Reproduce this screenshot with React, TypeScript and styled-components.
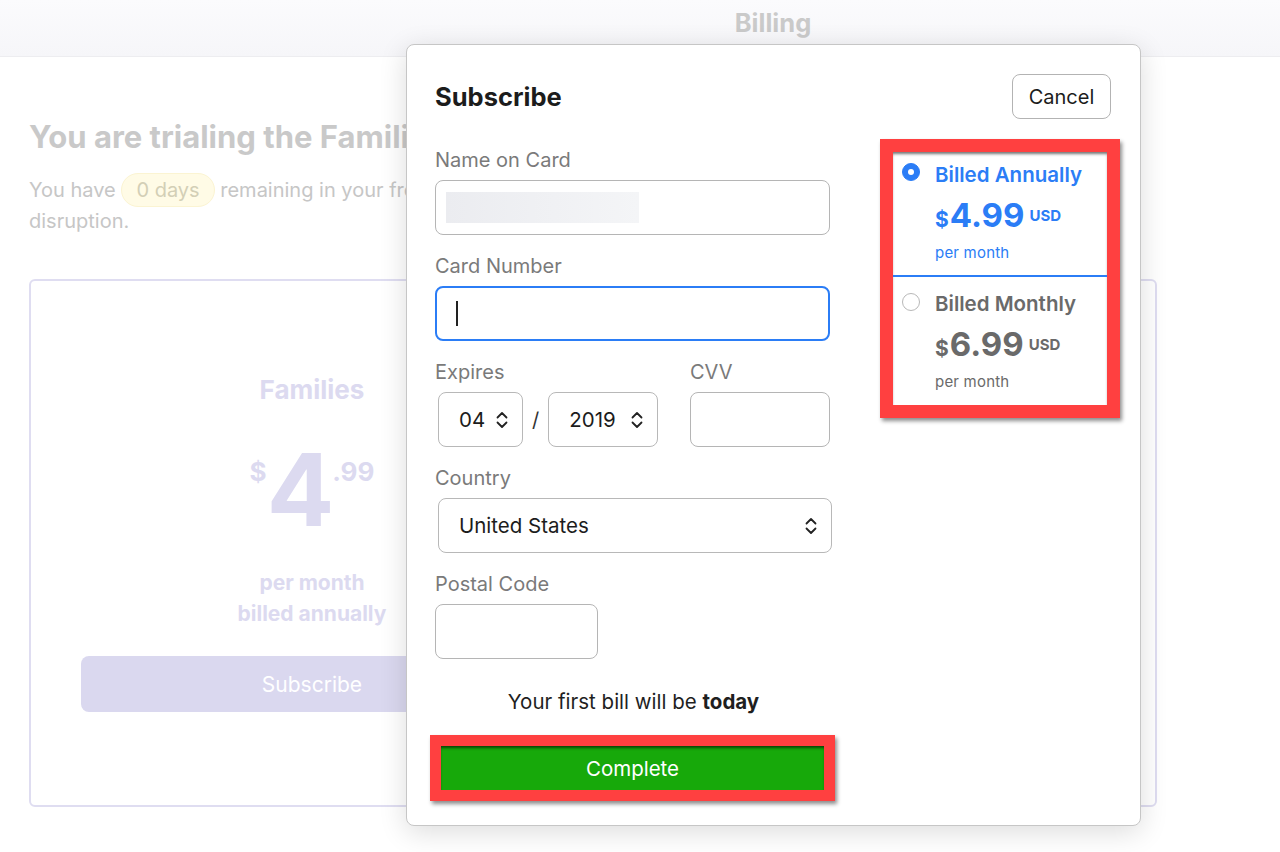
import styled, { createGlobalStyle } from "styled-components";

const GlobalStyles = createGlobalStyle`
  * { box-sizing: border-box; }
  body {
    margin: 0;
    background: #ffffff;
    font-family: "Inter", "Noto Sans", sans-serif;
    color: #1f1f1f;
  }
`;

const Page = styled.div`
  position: relative;
  width: 1280px;
  height: 852px;
  overflow: hidden;
  background: #ffffff;
`;

const Header = styled.header`
  height: 57px;
  padding: 8px 0 0 266px;
  display: flex;
  justify-content: center;
  align-items: flex-start;
  background: linear-gradient(#fbfbfd, #f6f6f9);
  border-bottom: 1px solid #ededf0;
`;

const HeaderTitle = styled.div`
  font-size: 25.5px;
  font-weight: 700;
  line-height: 30px;
  color: #cacaca;
`;

const Main = styled.main`
  padding: 67px 0 0 29px;
`;

const Heading = styled.h1`
  margin: 0;
  font-size: 31px;
  line-height: 26px;
  font-weight: 700;
  color: #c9c9c9;
  white-space: nowrap;
`;

const Intro = styled.p`
  margin: 25px 0 0;
  font-size: 20px;
  line-height: 31px;
  color: #c6c6c6;
  white-space: nowrap;
`;

const DaysBadge = styled.span`
  display: inline-block;
  height: 34px;
  margin: -2px 0;
  line-height: 32px;
  padding: 0 14px;
  border-radius: 17px;
  background: #fffbe6;
  border: 1px solid #fbf4d2;
  color: #d3cfb6;
`;

const PlanCard = styled.section`
  margin-top: 42px;
  width: 1128px;
  height: 528px;
  border: 2px solid #dfddf1;
  border-radius: 6px;
  padding-left: 50px;
  display: flex;
`;

const PlanColumn = styled.div`
  width: 462px;
  padding-top: 94px;
  text-align: center;
  color: #dcdaf0;
`;

const PlanName = styled.div`
  font-size: 26px;
  line-height: 30px;
  font-weight: 700;
`;

const PlanPrice = styled.div`
  margin-top: 35px;
  display: flex;
  justify-content: center;
  font-weight: 700;
`;

const PriceSmall = styled.span`
  margin-top: 17px;
  font-size: 26px;
  line-height: 30px;
`;

const PriceBig = styled.span`
  font-size: 100px;
  line-height: 100px;
  margin: 0 -2px 0 0;
`;

const PlanNote = styled.div<{ $first?: boolean }>`
  margin-top: ${({ $first }) => ($first ? "27px" : "0")};
  font-size: 21px;
  line-height: 31px;
  font-weight: 700;
`;

const GhostButton = styled.button`
  margin-top: 27px;
  width: 100%;
  height: 56px;
  border: none;
  border-radius: 8px;
  background: #dad8ef;
  color: #ffffff;
  font-family: inherit;
  font-size: 21px;
`;

/* modal sits over the dimmed page */
const Modal = styled.div`
  position: absolute;
  left: 406px;
  top: 44px;
  width: 735px;
  display: flex;
  padding: 29px 29px 35px 28px;
  background: #ffffff;
  border: 1px solid #c6c6c6;
  border-radius: 8px;
  box-shadow: 0 6px 28px rgba(0, 0, 0, 0.14);
`;

const FormColumn = styled.div`
  width: 397px;
  display: flex;
  flex-direction: column;
`;

const ModalTitle = styled.h2`
  margin: 0 0 31px;
  font-size: 25.5px;
  line-height: 45px;
  font-weight: 700;
  color: #1c1c1c;
`;

const Field = styled.div`
  margin-bottom: 21px;
`;

const Label = styled.div`
  font-size: 20px;
  line-height: 20px;
  color: #7a7a7a;
  margin-bottom: 10px;
`;

const InputBox = styled.div<{ $width?: number; $focused?: boolean }>`
  width: ${({ $width }) => ($width ? `${$width}px` : "395px")};
  height: 55px;
  display: flex;
  align-items: center;
  padding: 0 ${({ $focused }) => ($focused ? "19px" : "10px")};
  border: ${({ $focused }) => ($focused ? "2px solid #2b7df6" : "1px solid #b5b5b5")};
  border-radius: 8px;
  background: #ffffff;
`;

const Redacted = styled.span`
  width: 193px;
  height: 31px;
  background: linear-gradient(90deg, #ebecf0, #f4f5f7);
`;

const Caret = styled.span`
  width: 2px;
  height: 25px;
  background: #222;
`;

const Select = styled.div<{ $width: number }>`
  width: ${({ $width }) => $width}px;
  height: 55px;
  margin-left: 3px;
  display: flex;
  align-items: center;
  justify-content: space-between;
  padding: 0 14px 0 20px;
  border: 1px solid #b8b8b8;
  border-radius: 8px;
  font-size: 20.5px;
  color: #1c1c1c;
`;

const ExpiryGrid = styled.div`
  display: grid;
  grid-template-columns: 255px 1fr;
`;

const ExpiryRow = styled.div`
  display: flex;
  align-items: center;
`;

const Slash = styled.span`
  margin: 0 6px 0 9px;
  font-size: 20px;
  color: #333;
`;

const BillNote = styled.p`
  margin: 10px 0 0;
  font-size: 20.5px;
  line-height: 24px;
  text-align: center;
  color: #1f1f1f;
  b { font-weight: 700; }
`;

const CompleteButton = styled.button`
  margin: 32px 8px 0 6px;
  height: 44px;
  border: none;
  background: #17a90a;
  color: #ffffff;
  font-family: inherit;
  font-size: 20.5px;
  box-shadow: inset 0 3px 3px -1px rgba(0, 0, 0, 0.6), 0 0 0 11px #ff4040,
    2px 3px 4px 11px rgba(0, 0, 0, 0.45);
`;

const SideColumn = styled.div`
  flex: 1;
  display: flex;
  flex-direction: column;
  align-items: flex-end;
`;

const CancelButton = styled.button`
  width: 99px;
  height: 45px;
  border: 1px solid #b3b3b3;
  border-radius: 8px;
  background: #ffffff;
  font-family: inherit;
  font-size: 20px;
  color: #1c1c1c;
`;

const OptionPanel = styled.div`
  margin: 33px 4px 0 0;
  width: 214px;
  background: #ffffff;
  box-shadow: inset 0 3px 3px -1px rgba(0, 0, 0, 0.55), 0 0 0 13px #ff4040,
    2px 3px 4px 13px rgba(0, 0, 0, 0.45);
`;

const Option = styled.div<{ $active?: boolean; $first?: boolean }>`
  display: flex;
  gap: 15px;
  padding: ${({ $first }) => ($first ? "11px 0 12px 9px" : "15px 0 13px 9px")};
  border-bottom: ${({ $first }) => ($first ? "2px solid #2b7df6" : "none")};
  color: ${({ $active }) => ($active ? "#2b7df6" : "#6a6a6a")};
`;

const Radio = styled.span<{ $checked?: boolean }>`
  flex: none;
  width: 18px;
  height: 18px;
  margin-top: ${({ $checked }) => ($checked ? "0" : "1px")};
  border-radius: 50%;
  display: flex;
  align-items: center;
  justify-content: center;
  background: ${({ $checked }) => ($checked ? "#2b7df6" : "#ffffff")};
  border: 1px solid ${({ $checked }) => ($checked ? "#2b7df6" : "#b8b8b8")};
  &::after {
    content: "";
    width: 6px;
    height: 6px;
    border-radius: 50%;
    background: #ffffff;
    display: ${({ $checked }) => ($checked ? "block" : "none")};
  }
`;

const OptionText = styled.div`
  display: flex;
  flex-direction: column;
`;

const OptionTitle = styled.div`
  font-size: 20.5px;
  line-height: 24px;
  font-weight: 600;
  white-space: nowrap;
`;

const OptionPrice = styled.div`
  margin-top: 8px;
  height: 40px;
  font-size: 33px;
  line-height: 40px;
  font-weight: 700;
  white-space: nowrap;
`;

const Dollar = styled.span`
  font-size: 21px;
  line-height: 1;
  margin-right: 1px;
`;

const Amount = styled.span`
  font-size: 33px;
  line-height: 1;
`;

const Currency = styled.span`
  margin-left: 5px;
  font-size: 15px;
  line-height: 1;
  vertical-align: 6px;
`;

const PerMonth = styled.div`
  margin-top: 8px;
  font-size: 15px;
  line-height: 20px;
  letter-spacing: 0.2px;
`;

const Chevrons = () => (
  <svg width="12" height="20" viewBox="0 0 12 20" fill="none" stroke="#222" strokeWidth="1.8" strokeLinecap="round" strokeLinejoin="round">
    <path d="M1.5 7.5 L6 3 L10.5 7.5" />
    <path d="M1.5 12.5 L6 17 L10.5 12.5" />
  </svg>
);

const plans = [
  { id: "annual", title: "Billed Annually", amount: "4.99", active: true },
  { id: "monthly", title: "Billed Monthly", amount: "6.99", active: false },
];

export default function App() {
  return (
    <Page>
      <GlobalStyles />
      <Header>
        <HeaderTitle>Billing</HeaderTitle>
      </Header>
      <Main>
        <Heading>You are trialing the Families plan</Heading>
        <Intro>
          You have <DaysBadge>0 days</DaysBadge> remaining in your free trial. Subscribe now to avoid any
          <br />
          disruption.
        </Intro>
        <PlanCard>
          <PlanColumn>
            <PlanName>Families</PlanName>
            <PlanPrice>
              <PriceSmall>$</PriceSmall>
              <PriceBig>4</PriceBig>
              <PriceSmall>.99</PriceSmall>
            </PlanPrice>
            <PlanNote $first>per month</PlanNote>
            <PlanNote>billed annually</PlanNote>
            <GhostButton>Subscribe</GhostButton>
          </PlanColumn>
        </PlanCard>
      </Main>

      <Modal>
        <FormColumn>
          <ModalTitle>Subscribe</ModalTitle>
          <Field>
            <Label>Name on Card</Label>
            <InputBox>
              <Redacted />
            </InputBox>
          </Field>
          <Field>
            <Label>Card Number</Label>
            <InputBox $focused>
              <Caret />
            </InputBox>
          </Field>
          <ExpiryGrid>
            <Field>
              <Label>Expires</Label>
              <ExpiryRow>
                <Select $width={85}>
                  04 <Chevrons />
                </Select>
                <Slash>/</Slash>
                <Select $width={110}>
                  2019 <Chevrons />
                </Select>
              </ExpiryRow>
            </Field>
            <Field>
              <Label>CVV</Label>
              <InputBox $width={140} />
            </Field>
          </ExpiryGrid>
          <Field>
            <Label>Country</Label>
            <Select $width={394}>
              United States <Chevrons />
            </Select>
          </Field>
          <Field>
            <Label>Postal Code</Label>
            <InputBox $width={163} />
          </Field>
          <BillNote>
            Your first bill will be <b>today</b>
          </BillNote>
          <CompleteButton>Complete</CompleteButton>
        </FormColumn>

        <SideColumn>
          <CancelButton>Cancel</CancelButton>
          <OptionPanel>
            {plans.map((p, i) => (
              <Option key={p.id} $active={p.active} $first={i === 0}>
                <Radio $checked={p.active} />
                <OptionText>
                  <OptionTitle>{p.title}</OptionTitle>
                  <OptionPrice>
                    <Dollar>$</Dollar>
                    <Amount>{p.amount}</Amount>
                    <Currency>USD</Currency>
                  </OptionPrice>
                  <PerMonth>per month</PerMonth>
                </OptionText>
              </Option>
            ))}
          </OptionPanel>
        </SideColumn>
      </Modal>
    </Page>
  );
}
